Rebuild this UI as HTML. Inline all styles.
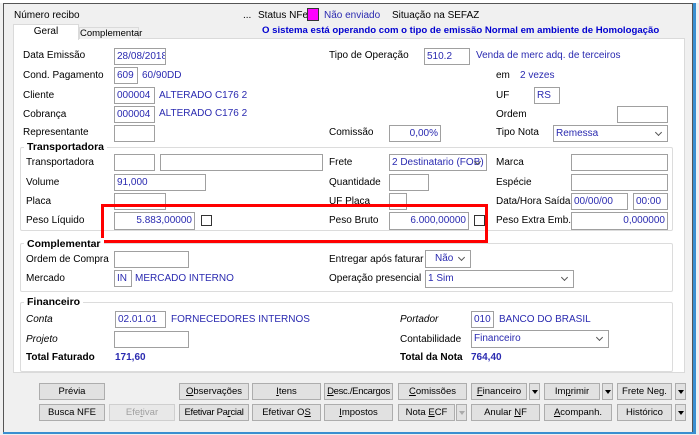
<!DOCTYPE html>
<html><head><meta charset="utf-8"><style>
*{box-sizing:border-box;margin:0;padding:0}
body{width:699px;height:435px;background:#f0f0f0;font-family:"Liberation Sans",sans-serif;font-size:10px;color:#000;position:relative;overflow:hidden}
.a{position:absolute;white-space:nowrap}
.l{position:absolute;white-space:nowrap;line-height:12px}
.i{position:absolute;background:#fff;border:1px solid #a0a0a0;color:#2a2ab0;line-height:15px;padding-left:2px;white-space:nowrap;overflow:hidden}
.r{text-align:right;padding-right:2px}
.v{position:absolute;color:#2a2ab0;white-space:nowrap;line-height:12px}
.s{padding-right:16px}
.s:after{content:"";position:absolute;right:6px;top:4px;width:4px;height:4px;border-right:1px solid #555;border-bottom:1px solid #555;transform:rotate(45deg)}
.g{position:absolute;border:1px solid #dcdcdc;border-radius:2px}
.gt{position:absolute;font-weight:bold;background:#fff;padding:0 3px;line-height:12px;font-size:10.5px}
.b{position:absolute;background:#e1e1e1;border:1px solid #adadad;text-align:center;line-height:15px;height:17px;font-size:9.5px;overflow:hidden;white-space:nowrap}
.d{color:#a0a0a0;border-color:#cfcfcf;background:#e8e8e8}
.ar{position:absolute;background:#e1e1e1;border:1px solid #adadad;height:17px}
.ar:after{content:"";position:absolute;left:2px;top:6px;border-left:3px solid transparent;border-right:3px solid transparent;border-top:4px solid #000}
.ar.d:after{border-top-color:#aaa}
.cb{position:absolute;width:11px;height:11px;border:1px solid #333;background:#fff}
</style></head><body>
<div class="a" style="left:0;top:0;width:699px;height:3px;background:#fff"></div>
<div class="a" style="left:3px;top:3px;width:690px;height:430px;border:1px solid #555"></div>
<div class="a" style="left:693px;top:3px;width:3px;height:430px;background:#3a8fd0"></div>
<div class="a" style="left:3px;top:432px;width:693px;height:2px;background:#3a8fd0"></div>

<div class="l" style="left:14px;top:10px">Número recibo</div>
<div class="l" style="left:243px;top:10px">...</div>
<div class="l" style="left:258px;top:10px">Status NFe</div>
<div class="a" style="left:307px;top:8px;width:12px;height:13px;background:#ff00ff;border:1px solid #333"></div>
<div class="v" style="left:324px;top:10px">Não enviado</div>
<div class="l" style="left:392px;top:10px">Situação na SEFAZ</div>

<div class="a" style="left:13px;top:38px;width:672px;height:335px;background:#fff;border:1px solid #dadada"></div>
<div class="a" style="left:13px;top:24px;width:66px;height:16px;background:#fff;border:1px solid #dadada;border-bottom:none;text-align:center;line-height:14px">Geral</div>
<div class="a" style="left:79px;top:27px;width:60px;height:12px;background:#f0f0f0;border:1px solid #dadada;border-bottom:none;text-align:center;line-height:12px;font-size:9.5px">Complementar</div>
<div class="a" style="left:262px;top:25px;color:#0000d0;font-weight:bold;font-size:9.6px;line-height:12px">O sistema está operando com o tipo de emissão Normal em ambiente de Homologação</div>

<div class="l" style="left:23px;top:50px">Data Emissão</div><div class="i" style="left:114px;top:48px;width:52px;height:17px">28/08/2018</div>
<div class="l" style="left:23px;top:70px">Cond. Pagamento</div><div class="i" style="left:114px;top:67px;width:24px;height:17px">609</div><div class="v" style="left:142px;top:70px">60/90DD</div>
<div class="l" style="left:23px;top:90px">Cliente</div><div class="i" style="left:114px;top:87px;width:41px;height:17px">000004</div><div class="v" style="left:159px;top:90px">ALTERADO C176 2</div>
<div class="l" style="left:23px;top:109px">Cobrança</div><div class="i" style="left:114px;top:106px;width:41px;height:17px">000004</div><div class="v" style="left:159px;top:108px">ALTERADO C176 2</div>
<div class="l" style="left:23px;top:127px">Representante</div><div class="i" style="left:114px;top:125px;width:41px;height:17px"></div>

<div class="l" style="left:329px;top:50px">Tipo de Operação</div><div class="i" style="left:424px;top:48px;width:46px;height:17px">510.2</div><div class="v" style="left:476px;top:50px">Venda de merc adq. de terceiros</div>
<div class="l" style="left:496px;top:70px">em</div><div class="v" style="left:520px;top:70px">2 vezes</div>
<div class="l" style="left:496px;top:90px">UF</div><div class="i" style="left:534px;top:87px;width:26px;height:17px">RS</div>
<div class="l" style="left:496px;top:109px">Ordem</div><div class="i" style="left:617px;top:106px;width:51px;height:17px"></div>
<div class="l" style="left:329px;top:127px">Comissão</div><div class="i r" style="left:389px;top:125px;width:52px;height:17px">0,00%</div>
<div class="l" style="left:496px;top:127px">Tipo Nota</div><div class="i s" style="left:553px;top:125px;width:115px;height:17px">Remessa</div>

<div class="g" style="left:20px;top:147px;width:653px;height:84px"></div><div class="gt" style="left:24px;top:141px">Transportadora</div>
<div class="l" style="left:26px;top:157px">Transportadora</div><div class="i" style="left:114px;top:154px;width:41px;height:17px"></div><div class="i" style="left:160px;top:154px;width:163px;height:17px"></div>
<div class="l" style="left:26px;top:177px">Volume</div><div class="i" style="left:114px;top:174px;width:92px;height:17px">91,000</div>
<div class="l" style="left:26px;top:196px">Placa</div><div class="i" style="left:114px;top:193px;width:52px;height:17px"></div>
<div class="l" style="left:26px;top:215px">Peso Líquido</div><div class="i r" style="left:114px;top:212px;width:81px;height:18px">5.883,00000</div><div class="cb" style="left:201px;top:215px"></div>
<div class="l" style="left:329px;top:157px">Frete</div><div class="i s" style="left:389px;top:154px;width:98px;height:17px">2 Destinatario (FOB)</div>
<div class="l" style="left:329px;top:177px">Quantidade</div><div class="i" style="left:389px;top:174px;width:40px;height:17px"></div>
<div class="l" style="left:329px;top:196px">UF Placa</div><div class="i" style="left:389px;top:193px;width:18px;height:17px"></div>
<div class="l" style="left:329px;top:215px">Peso Bruto</div><div class="i r" style="left:389px;top:212px;width:80px;height:18px">6.000,00000</div><div class="cb" style="left:474px;top:215px"></div>
<div class="l" style="left:496px;top:157px">Marca</div><div class="i" style="left:571px;top:154px;width:97px;height:17px"></div>
<div class="l" style="left:496px;top:177px">Espécie</div><div class="i" style="left:571px;top:174px;width:97px;height:17px"></div>
<div class="l" style="left:496px;top:196px">Data/Hora Saída</div><div class="i" style="left:571px;top:193px;width:57px;height:17px">00/00/00</div><div class="i" style="left:633px;top:193px;width:35px;height:17px">00:00</div>
<div class="l" style="left:496px;top:215px">Peso Extra Emb.</div><div class="i r" style="left:571px;top:212px;width:97px;height:18px">0,000000</div>
<div class="a" style="left:101px;top:204px;width:387px;height:39px;border:3px solid #f00"></div>

<div class="g" style="left:20px;top:243px;width:653px;height:49px"></div><div class="gt" style="left:24px;top:238px">Complementar</div>
<div class="l" style="left:26px;top:254px">Ordem de Compra</div><div class="i" style="left:114px;top:251px;width:75px;height:17px"></div>
<div class="l" style="left:26px;top:273px">Mercado</div><div class="i" style="left:114px;top:270px;width:18px;height:17px">IN</div><div class="v" style="left:135px;top:273px">MERCADO INTERNO</div>
<div class="l" style="left:329px;top:254px">Entregar após faturar</div><div class="i s" style="left:425px;top:250px;width:46px;height:18px;padding-left:9px">Não</div>
<div class="l" style="left:329px;top:273px">Operação presencial</div><div class="i s" style="left:425px;top:270px;width:149px;height:18px">1 Sim</div>

<div class="g" style="left:20px;top:302px;width:653px;height:70px"></div><div class="gt" style="left:24px;top:296px">Financeiro</div>
<div class="l" style="left:26px;top:314px;font-style:italic">Conta</div><div class="i" style="left:115px;top:311px;width:51px;height:17px">02.01.01</div><div class="v" style="left:171px;top:314px">FORNECEDORES INTERNOS</div>
<div class="l" style="left:26px;top:334px;font-style:italic">Projeto</div><div class="i" style="left:114px;top:331px;width:75px;height:17px"></div>
<div class="l" style="left:26px;top:352px;font-weight:bold">Total Faturado</div><div class="v" style="left:115px;top:352px;font-weight:bold">171,60</div>
<div class="l" style="left:400px;top:314px;font-style:italic">Portador</div><div class="i" style="left:471px;top:311px;width:23px;height:17px">010</div><div class="v" style="left:499px;top:314px">BANCO DO BRASIL</div>
<div class="l" style="left:400px;top:334px">Contabilidade</div><div class="i s" style="left:471px;top:330px;width:138px;height:18px">Financeiro</div>
<div class="l" style="left:400px;top:352px;font-weight:bold">Total da Nota</div><div class="v" style="left:471px;top:352px;font-weight:bold">764,40</div>

<div class="b" style="left:39px;top:383px;width:66px">Prévia</div>
<div class="b" style="left:179px;top:383px;width:70px"><u>O</u>bservações</div>
<div class="b" style="left:252px;top:383px;width:69px"><u>I</u>tens</div>
<div class="b" style="left:324px;top:383px;width:69px;letter-spacing:-0.3px"><u>D</u>esc./Encargos</div>
<div class="b" style="left:398px;top:383px;width:69px"><u>C</u>omissões</div>
<div class="b" style="left:471px;top:383px;width:56px"><u>F</u>inanceiro</div><div class="ar" style="left:529px;top:383px;width:11px"></div>
<div class="b" style="left:544px;top:383px;width:56px">Im<u>p</u>rimir</div><div class="ar" style="left:602px;top:383px;width:11px"></div>
<div class="b" style="left:617px;top:383px;width:55px">Frete Neg.</div><div class="ar" style="left:675px;top:383px;width:11px"></div>

<div class="b" style="left:39px;top:404px;width:66px">Busca NFE</div>
<div class="b d" style="left:109px;top:404px;width:66px">Efe<u>t</u>ivar</div>
<div class="b" style="left:179px;top:404px;width:70px;letter-spacing:-0.3px">Efetivar Pa<u>r</u>cial</div>
<div class="b" style="left:252px;top:404px;width:69px">Efetivar O<u>S</u></div>
<div class="b" style="left:324px;top:404px;width:69px"><u>I</u>mpostos</div>
<div class="b" style="left:398px;top:404px;width:57px">Nota <u>E</u>CF</div><div class="ar d" style="left:456px;top:404px;width:11px"></div>
<div class="b" style="left:471px;top:404px;width:69px">Anular <u>N</u>F</div>
<div class="b" style="left:544px;top:404px;width:68px"><u>A</u>companh.</div>
<div class="b" style="left:617px;top:404px;width:55px">Histórico</div><div class="ar" style="left:675px;top:404px;width:11px"></div>
</body></html>
